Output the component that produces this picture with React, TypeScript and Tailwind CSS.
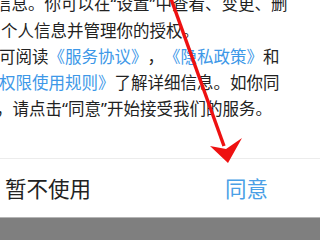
import React from 'react';

const Link = ({ children }: { children: React.ReactNode }) => (
  <span className="text-[#3d98e8]">{children}</span>
);

// curly quotes rendered narrow, as in the reference
const Q = ({ children }: { children: React.ReactNode }) => (
  <span className="font-['Noto_Sans',sans-serif]">{children}</span>
);

const App = () => {
  return (
    <div className="relative w-[320px] h-[240px] overflow-hidden bg-white font-['Noto_Sans_CJK_SC',sans-serif] [text-spacing-trim:space-all]">
      <div className="h-[158px] overflow-hidden">
        <div className="mt-[-10px] text-[16.5px] leading-[26px] text-[#222] whitespace-nowrap">
          <div className="ml-[-5px]">
            信息。你可以在<Q>“</Q>设置<Q>”</Q>中查看、变更、删
          </div>
          <div className="ml-[1px]">个人信息并管理你的授权。</div>
          <div className="ml-[-1px]">
            可阅读<Link>《服务协议》</Link>，<Link>《隐私政策》</Link>和
          </div>
          <div className="ml-[-1px]">
            <Link>权限使用规则》</Link>了解详细信息。如你同
          </div>
          <div className="ml-[-4px]">
            ，请点击<Q>“</Q>同意<Q>”</Q>开始接受我们的服务。
          </div>
        </div>
      </div>

      <div className="h-[59px] border-t border-[#ececec] flex items-center justify-between pl-[5px] pr-[52px] text-[21.5px]">
        <span className="text-[#222]">暂不使用</span>
        <span className="text-[#4a9fe6]">同意</span>
      </div>

      <div className="h-[23px] bg-[#7f7f7f] border-t border-[#b5b5b5]" />

      {/* red annotation arrow */}
      <svg className="absolute left-0 top-0" width="320" height="240" viewBox="0 0 320 240">
        <line x1="170" y1="-4" x2="224" y2="146" stroke="#ee1111" strokeWidth="3.4" />
        <polygon points="210,146 228,163 242,138 226,149" fill="#ee1111" />
      </svg>
    </div>
  );
};

export default App;
